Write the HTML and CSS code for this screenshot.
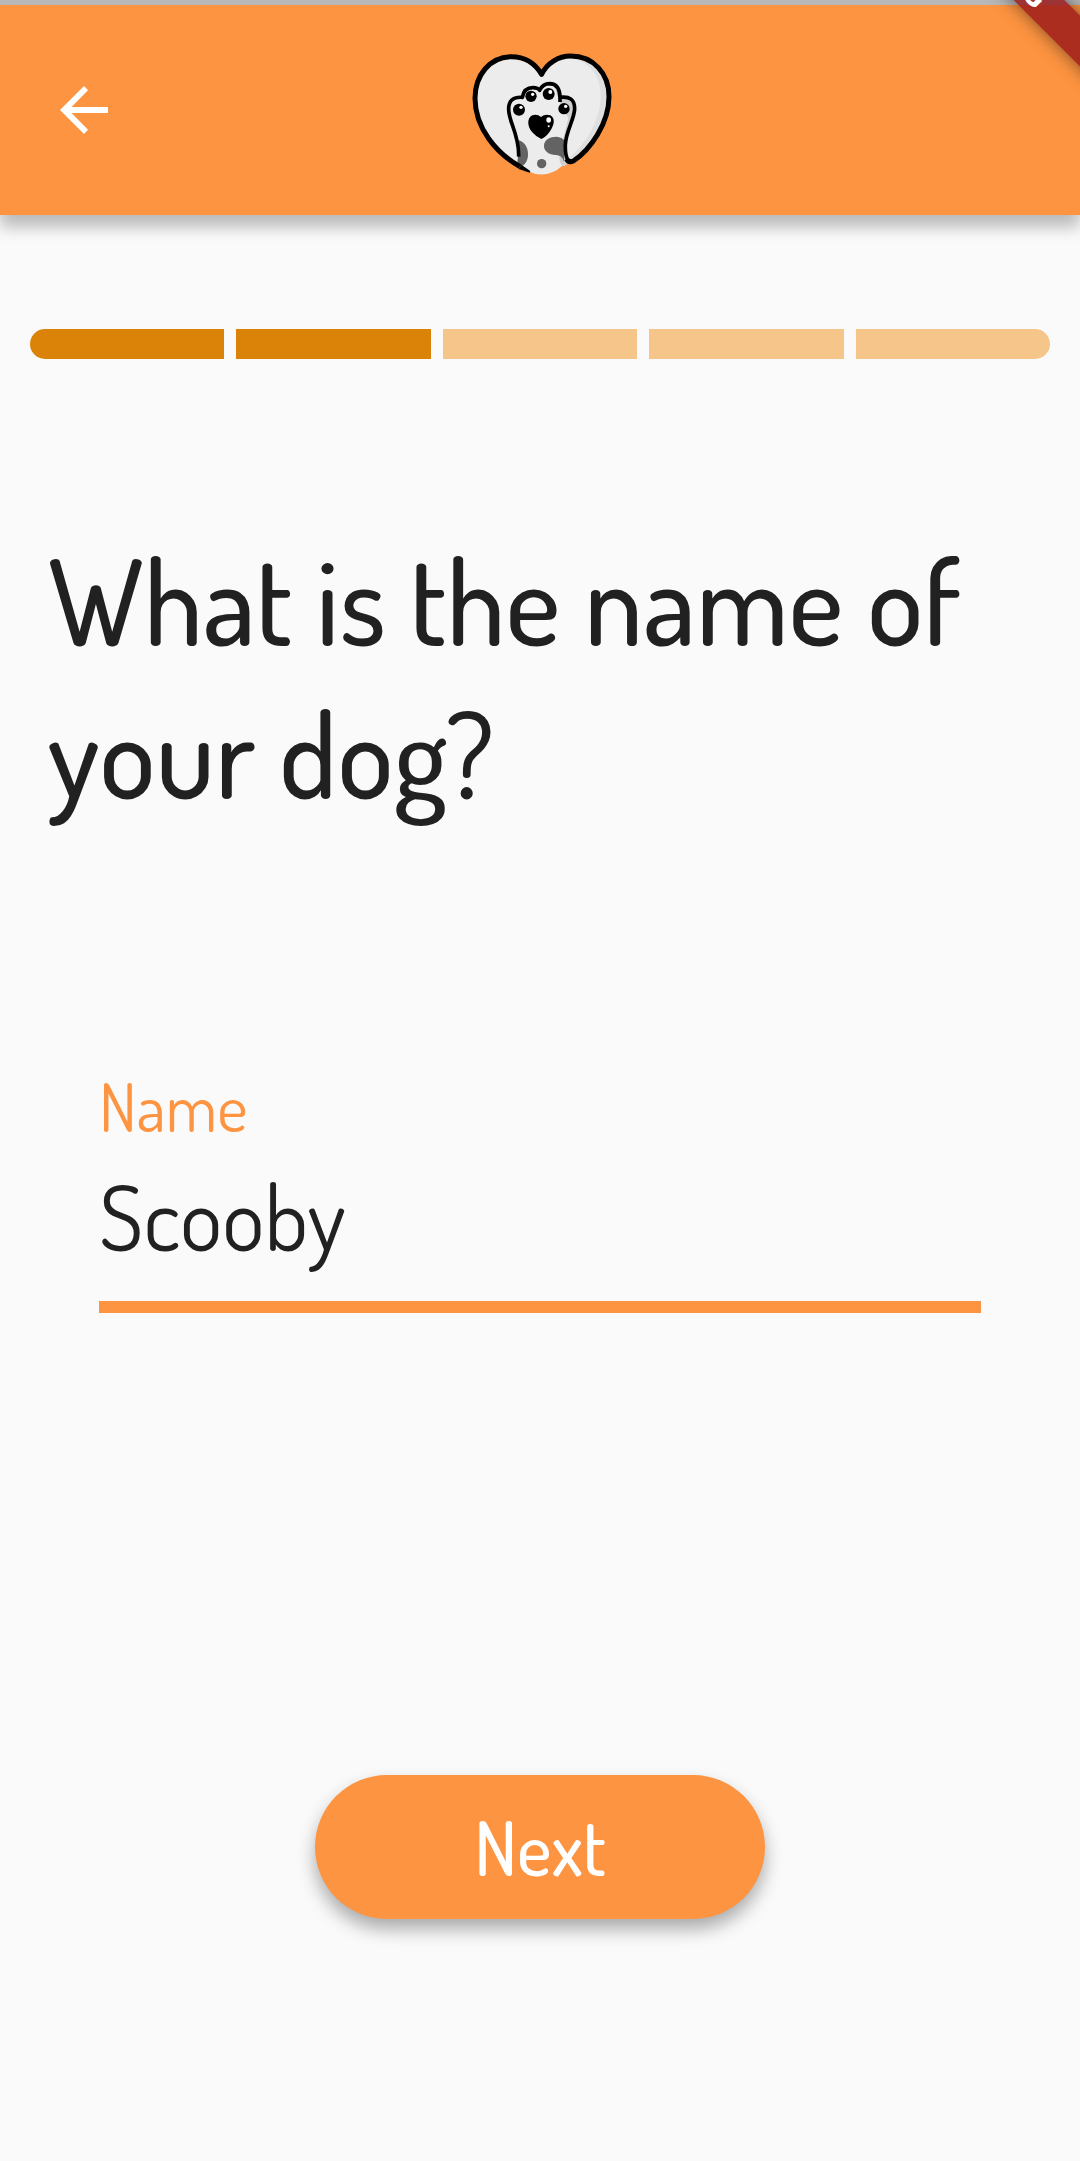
FILE: index.html
```html
<!DOCTYPE html>
<html lang="en">
<head>
<meta charset="utf-8">
<meta name="viewport" content="width=device-width, initial-scale=1">
<title>Dog name</title>
<link rel="stylesheet" href="styles.css">
</head>
<body>
<header class="app-bar">
  <button class="back" type="button" aria-label="Back">
    <svg class="back-icon" viewBox="0 0 48 48" aria-hidden="true"><path d="M48 21H11.500L28 4.200 24 0 0 24l24 24 4-4.200L11.500 27H48z" fill="#fff"/></svg>
  </button>
  <svg class="logo" viewBox="0 0 480 435" role="img" aria-label="Paw in a heart">
    <path d="M245 103C225 70 195 50 155 50C90 50 45 105 45 175C45 265 120 350 205 394Q245 415 290 391L322 365C385 340 447 250 447 170C447 100 400 48 332 48C295 48 260 70 245 103Z" fill="#ececec"/>
    <path d="M330 54C385 62 422 105 422 165C422 245 375 315 322 359C385 340 441 250 441 170C441 100 395 50 330 54Z" fill="#dfdfdf"/>
    <path d="M283 136Q304 148 303 172Q345 170 346 202C346 235 322 270 316 315Q314 350 325 370L314 378Q300 382 298 350Q310 290 325 235L300 190Z" fill="#cfcfcf"/>
    <path d="M177 301C196 307 204 324 204 344C204 362 194 377 178 381L172 374Z" fill="#636363"/>
    <path d="M252 318C252 299 270 290 289 290Q307 291 314 302L312 365Q306 346 288 345C266 344 252 334 252 318Z" fill="#636363"/>
    <circle cx="245" cy="371" r="14" fill="#636363"/>
    <g fill="none" stroke="#000" stroke-linejoin="round">
      <path d="M180 380C110 340 45 265 45 175C45 105 90 50 155 50C195 50 225 70 245 103C260 70 295 48 332 48C400 48 447 100 447 170C447 250 390 330 340 363Q325 369 320 357" stroke-width="15"/>
      <path d="M176 350C178 280 144 245 146 205Q147 169 187 172Q192 143 219 143Q234 143 239 151Q248 131 269 131Q299 132 300 172V186M300 172Q344 166 344 206C343 239 317 274 316 315Q315 345 324 361" stroke-width="11"/>
    </g>
    <g fill="#000"><path d="M184 374L211 393 209 398 176 387Z"/><circle cx="177" cy="209" r="18"/><circle cx="213" cy="169" r="17"/><circle cx="266" cy="162" r="18"/><circle cx="312" cy="206" r="17"/>
      <path d="M243 231Q231 220 217 226C200 235 202 260 216 276Q230 292 244 297Q258 292 270 274C284 254 286 234 271 226Q255 220 243 231Z"/></g>
    <g fill="#fff"><circle cx="183" cy="202" r="5"/><circle cx="218" cy="163" r="5"/><circle cx="271" cy="156" r="6"/><circle cx="317" cy="199" r="5"/><ellipse cx="266" cy="240" rx="7" ry="8"/><circle cx="266" cy="259" r="3"/></g>
  </svg>
  <div class="corner"><span class="ribbon">DEBUG</span></div>
</header>
<main class="page">
  <div class="steps" role="progressbar" aria-label="Step" aria-valuemin="0" aria-valuemax="5" aria-valuenow="2">
    <span class="step done"></span><span class="step done"></span><span class="step"></span><span class="step"></span><span class="step"></span>
  </div>
  <h1 class="question">What is the name of your dog?</h1>
  <form class="form">
    <div class="field">
      <label class="label" for="name">Name</label>
      <input class="input" id="name" type="text" value="Scooby">
    </div>
    <button class="next" type="button">Next</button>
  </form>
</main>
</body>
</html>
```
FILE: styles.css
```css
* { box-sizing: border-box; }

body {
  margin: 0;
  min-height: 100vh;
  background: #fafafa;
  color: #212121;
  font-family: Dosis, "Noto Sans CJK SC", "Open Sans", sans-serif;
}

.app-bar {
  position: relative;
  display: grid;
  grid-template-columns: 1fr auto 1fr;
  align-items: center;
  height: 215px;
  padding: 0 36px;
  border-top: 5px solid #b8b8b8;
  background: #fd9441;
  box-shadow: 0 12px 15px rgba(0, 0, 0, 0.26);
}

.back {
  display: grid;
  place-items: center;
  width: 96px;
  height: 96px;
  padding: 0;
  border: 0;
  background: none;
}

.back-icon { width: 48px; height: 48px; }

.logo { width: 160px; height: 145px; margin-top: 5px; }

.corner {
  position: absolute;
  top: -5px;
  right: 0;
  width: 150px;
  height: 120px;
  overflow: hidden;
}

.ribbon {
  position: absolute;
  top: -49px;
  right: -78px;
  width: 300px;
  background: rgba(152, 22, 24, 0.82);
  box-shadow: 0 0 18px rgba(0, 0, 0, 0.5);
  color: #fff;
  font: 900 30px/36px Roboto, sans-serif;
  text-align: center;
  transform: rotate(45deg);
}

.page { padding: 114px 30px 0; }

.steps {
  display: flex;
  gap: 12px;
  height: 30px;
  border-radius: 15px;
  overflow: hidden;
}

.step { flex: 1; background: #f5c58a; }
.step.done { background: #db8308; }

.question {
  margin: 164px 18px 0;
  font-size: 118px;
  font-weight: 500;
  line-height: 153px;
}

.form {
  display: flex;
  flex-direction: column;
  align-items: center;
  margin: 241px 69px 0;
}

.field {
  display: flex;
  flex-direction: column;
  width: 100%;
  border-bottom: 12px solid #fd9441;
}

.label {
  color: #fd9441;
  font-size: 66px;
  font-weight: 400;
  line-height: 72px;
}

.input {
  width: 100%;
  height: 159px;
  padding: 0 0 12px;
  border: 0;
  outline: 0;
  background: none;
  color: inherit;
  font: inherit;
  font-size: 90px;
  font-weight: 400;
}

.next {
  width: 450px;
  max-width: 100%;
  height: 144px;
  margin-top: 462px;
  border: 0;
  border-radius: 72px;
  background: #fd9441;
  box-shadow: 0 10px 18px rgba(0, 0, 0, 0.32);
  color: #fff;
  font: inherit;
  font-size: 74px;
  font-weight: 500;
}
```
